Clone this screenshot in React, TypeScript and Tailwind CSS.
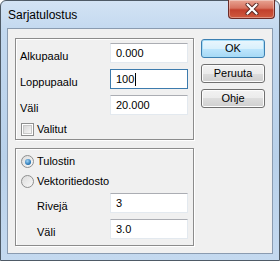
import React from "react";

const body = { fontFamily: '"Liberation Sans", Arial, sans-serif' };

function TextBox({ value, focused }: { value: string; focused?: boolean }) {
  return (
    <div
      className={
        "w-[78px] h-[20px] bg-white flex items-center pl-[5px] text-[11px] leading-[13px] text-black border " +
        (focused
          ? "border-[#3d7bad]"
          : "border-[#e3e9ef] border-t-[#abadb3]")
      }
    >
      <span>{value}</span>
      {focused && <span className="ml-[1px] w-[1px] h-[13px] bg-black" />}
    </div>
  );
}

function Row({ label, value, focused, indent }: { label: string; value: string; focused?: boolean; indent?: boolean }) {
  return (
    <div className="flex items-end justify-between">
      <span className={"text-[11px] leading-[13px] text-black " + (indent ? "pl-[16px]" : "")}>{label}</span>
      <TextBox value={value} focused={focused} />
    </div>
  );
}

function Radio({ checked, label }: { checked?: boolean; label: string }) {
  return (
    <div className="flex items-center gap-[3px] h-[13px]">
      <div className="w-[13px] h-[13px] rounded-full border border-[#8e8f8f] bg-[linear-gradient(135deg,#dcdcdc,#f8f8f8)] flex items-center justify-center">
        {checked && (
          <div className="w-[6px] h-[6px] rounded-full bg-[radial-gradient(circle_at_40%_35%,#9fd4f7,#1f6fb0_70%,#104f85)]" />
        )}
      </div>
      <span className="text-[11px] leading-[13px] text-black">{label}</span>
    </div>
  );
}

function Button({ label, def }: { label: string; def?: boolean }) {
  return (
    <div
      className={
        "w-[64px] h-[19px] rounded-[3px] border flex items-center justify-center text-[11px] leading-[13px] text-black " +
        (def
          ? "border-[#3c7fb1] shadow-[inset_0_0_0_1px_#a6dcf7] bg-[linear-gradient(180deg,#eaf6fd_0%,#d9f0fc_50%,#bee6fd_50%,#a7d9f5_100%)]"
          : "border-[#707070] shadow-[inset_0_0_0_1px_#fcfcfc] bg-[linear-gradient(180deg,#f2f2f2_0%,#ebebeb_50%,#dddddd_50%,#cfcfcf_100%)]")
      }
    >
      {label}
    </div>
  );
}

export default function App() {
  return (
    <div
      className="w-[280px] h-[261px] flex flex-col rounded-t-[6px] border border-[#4e5a66] bg-[linear-gradient(180deg,#d3e3f4_0%,#c2d8ef_12%,#b9d1ea_60%,#c4d9ef_100%)]"
      style={body}
    >
      {/* title bar */}
      <div className="h-[27px] flex items-start">
        <span className="pl-[7px] pt-[7px] text-[12px] leading-[15px] text-black">
          Sarjatulostus
        </span>
        <div className="ml-auto mr-[4px] w-[47px] h-[19px] -mt-[1px] rounded-b-[4px] border border-[#6b2b27] border-t-0 bg-[linear-gradient(180deg,#e8a493_0%,#d7725f_45%,#c2402c_55%,#cf5a3f_100%)] shadow-[inset_0_0_0_1px_rgba(255,255,255,0.35)] flex items-center justify-center">
          <svg width="14" height="12" viewBox="0 0 14 12">
            <path d="M2.5 1.5 L11.5 10.5 M11.5 1.5 L2.5 10.5" stroke="#5a2a25" strokeWidth="4" strokeLinecap="round" />
            <path d="M2.5 1.5 L11.5 10.5 M11.5 1.5 L2.5 10.5" stroke="#ffffff" strokeWidth="2.2" strokeLinecap="round" />
          </svg>
        </div>
      </div>

      {/* client area */}
      <div className="mx-[6px] h-[226px] border border-[#8a9bb0] bg-[#f0f0f0] pt-[9px] px-[7px] flex gap-[7px]">
        <div className="w-[179px] flex flex-col gap-[8px]">
          {/* group 1 */}
          <div className="h-[102px] border border-[#8c8c8c] shadow-[inset_1px_1px_0_#fff,1px_1px_0_#fff] pt-[4px] pl-[4px] pr-[5px] flex flex-col">
            <div className="flex flex-col gap-[6px]">
              <Row label="Alkupaalu" value="0.000" />
              <Row label="Loppupaalu" value="100" focused />
              <Row label="Väli" value="20.000" />
            </div>
            <div className="mt-[8px] pl-[1px] flex items-center gap-[3px]">
              <div className="w-[13px] h-[13px] border border-[#8e8f8f] bg-white p-[1px]">
                <div className="w-full h-full bg-[linear-gradient(135deg,#d8d8d8,#f6f6f6)] border border-[#c8c8c8]" />
              </div>
              <span className="text-[11px] leading-[13px] text-black">Valitut</span>
            </div>
          </div>
          {/* group 2 */}
          <div className="h-[98px] border border-[#8c8c8c] shadow-[inset_1px_1px_0_#fff,1px_1px_0_#fff] pt-[6px] pl-[5px] pr-[5px] flex flex-col">
            <div className="flex flex-col gap-[7px]">
              <Radio checked label="Tulostin" />
              <Radio label="Vektoritiedosto" />
            </div>
            <div className="mt-[5px] flex flex-col gap-[6px]">
              <Row label="Rivejä" value="3" indent />
              <Row label="Väli" value="3.0" indent />
            </div>
          </div>
        </div>
        <div className="pt-[1px] flex flex-col gap-[6px]">
          <Button label="OK" def />
          <Button label="Peruuta" />
          <Button label="Ohje" />
        </div>
      </div>
    </div>
  );
}
